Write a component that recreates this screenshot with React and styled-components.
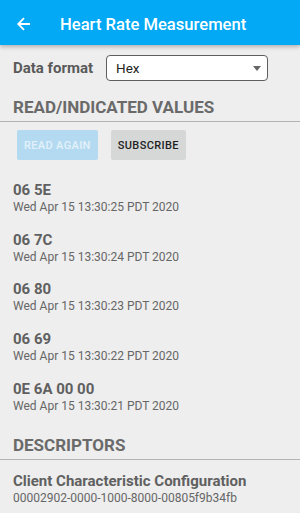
import React from 'react'
import styled, { createGlobalStyle } from 'styled-components'

const GlobalStyle = createGlobalStyle`
  html, body {
    margin: 0;
    padding: 0;
    background: #eeeeee;
  }
  body {
    font-family: Roboto, 'Noto Sans', sans-serif;
  }
`

const values = [
  { hex: '06 5E', time: 'Wed Apr 15 13:30:25 PDT 2020' },
  { hex: '06 7C', time: 'Wed Apr 15 13:30:24 PDT 2020' },
  { hex: '06 80', time: 'Wed Apr 15 13:30:23 PDT 2020' },
  { hex: '06 69', time: 'Wed Apr 15 13:30:22 PDT 2020' },
  { hex: '0E 6A 00 00', time: 'Wed Apr 15 13:30:21 PDT 2020' },
]

const App = () => {
  return (
    <>
      <GlobalStyle />
      <Screen>
        <AppBar>
          <BackButton aria-label="Back">
            <svg width="14" height="14" viewBox="0 0 14 14" fill="none">
              <path d="M13 7H1.6M7 1.2L1.2 7L7 12.8" stroke="#fff" strokeWidth="1.8" />
            </svg>
          </BackButton>
          <Title>Heart Rate Measurement</Title>
        </AppBar>

        <FormatRow>
          <FieldLabel>Data format</FieldLabel>
          <Select>
            <span>Hex</span>
            <Caret />
          </Select>
        </FormatRow>

        <SectionHeader $top={16}>READ/INDICATED VALUES</SectionHeader>

        <ButtonRow>
          <ActionButton $variant="disabled">READ AGAIN</ActionButton>
          <ActionButton>SUBSCRIBE</ActionButton>
        </ButtonRow>

        <ValueList>
          {values.map((v) => (
            <ValueItem key={v.time}>
              <ItemTitle>{v.hex}</ItemTitle>
              <ItemSub>{v.time}</ItemSub>
            </ValueItem>
          ))}
        </ValueList>

        <SectionHeader $top={14}>DESCRIPTORS</SectionHeader>

        <Descriptor>
          <ItemTitle>Client Characteristic Configuration</ItemTitle>
          <ItemSub>00002902-0000-1000-8000-00805f9b34fb</ItemSub>
        </Descriptor>
      </Screen>
    </>
  )
}

const Screen = styled.div`
  width: 300px;
  height: 513px;
  overflow: hidden;
  background: #eeeeee;
`

const AppBar = styled.header`
  box-sizing: border-box;
  height: 45px;
  background: #03a9f4;
  display: flex;
  align-items: center;
  padding: 3px 0 0 17px;
  box-shadow: 0 2px 4px rgba(0, 0, 0, 0.25);
  position: relative;
`

const BackButton = styled.button`
  border: 0;
  background: none;
  padding: 0;
  width: 14px;
  height: 14px;
  display: flex;
  margin-right: 29px;
`

const Title = styled.h1`
  margin: 0;
  color: #ffffff;
  font-size: 16.6px;
  font-weight: 500;
  letter-spacing: 0;
`

const FormatRow = styled.div`
  display: flex;
  align-items: center;
  margin-top: 10px;
  height: 26px;
  padding: 0 13px;
`

const FieldLabel = styled.span`
  width: 93px;
  font-size: 15px;
  font-weight: 700;
  color: #5a5a5a;
`

const Select = styled.div`
  box-sizing: border-box;
  width: 162px;
  height: 26px;
  background: #ffffff;
  border: 1px solid #5f5f5f;
  border-radius: 4px;
  display: flex;
  align-items: center;
  justify-content: space-between;
  padding: 0 6px 0 9px;
  font-size: 13.5px;
  color: #222222;
`

const Caret = styled.span`
  width: 0;
  height: 0;
  border-left: 4px solid transparent;
  border-right: 4px solid transparent;
  border-top: 5px solid #666666;
`

const SectionHeader = styled.h2`
  margin: 0;
  padding: ${(p) => p.$top}px 13px 4px;
  line-height: 20px;
  font-size: 17px;
  font-weight: 700;
  color: #6a6a6a;
  border-bottom: 1px solid #b4b4b4;
`

const ButtonRow = styled.div`
  display: flex;
  gap: 13px;
  margin: 8px 0 13px;
  padding: 0 17px;
`

const ActionButton = styled.button`
  height: 30px;
  padding: 0 7px;
  border: 0;
  border-radius: 2px;
  font-family: Roboto, sans-serif;
  font-size: 11px;
  font-weight: 500;
  letter-spacing: 0.35px;
  background: ${(p) => (p.$variant === 'disabled' ? '#b3daf0' : '#d6d7d7')};
  color: ${(p) => (p.$variant === 'disabled' ? '#e3f1fa' : '#1e1e1e')};
`

const ValueList = styled.div`
  display: flex;
  flex-direction: column;
`

const ValueItem = styled.div`
  padding: 8px 13px 7.7px;
`

const ItemTitle = styled.div`
  font-size: 15px;
  line-height: 18px;
  font-weight: 700;
  color: #606060;
`

const ItemSub = styled.div`
  font-size: 12px;
  line-height: 16px;
  color: #666666;
`

const Descriptor = styled.div`
  padding: 12px 13px 0;
`

export default App
